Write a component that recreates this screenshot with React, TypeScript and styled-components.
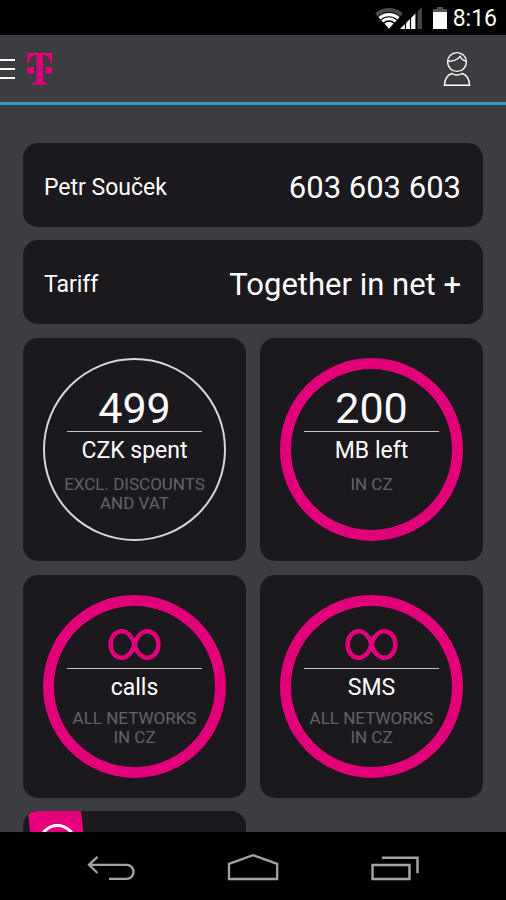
import React from "react";
import styled, { createGlobalStyle } from "styled-components";

const MAGENTA = "#e2007a";

const GlobalStyle = createGlobalStyle`
  *, *::before, *::after { box-sizing: border-box; }
  body {
    margin: 0;
    background: #3c3d41;
    font-family: Roboto, "Liberation Sans", sans-serif;
    color: #fff;
  }
  h2, p { margin: 0; font-weight: 400; }
  svg { display: block; }
`;

const Screen = styled.div`
  display: flex;
  flex-direction: column;
  height: 100vh;
`;

const StatusBar = styled.div`
  display: flex;
  flex: none;
  justify-content: flex-end;
  align-items: center;
  height: 35px;
  padding-right: 9px;
  background: #000;
`;

const Clock = styled.time`
  margin-left: 6px;
  padding-top: 3px;
  font-size: 23px;
  line-height: 32px;
`;

const Header = styled.header`
  display: flex;
  flex: none;
  align-items: center;
  height: 70px;
  padding-right: 35px;
  border-bottom: 3px solid #329bc9;
`;

const IconButton = styled.button`
  display: flex;
  padding: 0;
  border: 0;
  background: none;
  color: inherit;
  cursor: pointer;
`;

const MenuButton = styled(IconButton)`
  margin-right: 12px;
`;

const ProfileButton = styled(IconButton)`
  margin-left: auto;
`;

const Content = styled.main`
  display: flex;
  flex: 1;
  flex-direction: column;
  gap: 13px;
  min-height: 0;
  padding: 38px 23px 0;
  overflow: hidden;
`;

const Card = styled.section`
  flex: none;
  border-radius: 15px;
  background: #1b191e;
`;

const InfoCard = styled(Card)`
  display: flex;
  justify-content: space-between;
  align-items: center;
  height: 84px;
  padding: 6px 22px 0 21px;
`;

const InfoLabel = styled.h2`
  font-size: 23px;
  line-height: 32px;
`;

const InfoValue = styled.p`
  font-size: 31px;
  line-height: 40px;
`;

const Tiles = styled.div`
  display: grid;
  flex: none;
  grid-template-columns: 1fr 1fr;
  gap: 14px;
  padding-top: 1px;
`;

const Tile = styled(Card)`
  padding: 20px;
  aspect-ratio: 1;
`;

const Ring = styled.div<{ $full: boolean }>`
  display: flex;
  flex-direction: column;
  align-items: center;
  height: 100%;
  padding-top: ${(p) => (p.$full ? 15 : 24)}px;
  border: ${(p) => (p.$full ? `11px solid ${MAGENTA}` : "2px solid #d5d7d9")};
  border-radius: 50%;
  text-align: center;
`;

const Amount = styled.div`
  display: flex;
  justify-content: center;
  width: 135px;
  height: 48px;
  border-bottom: 1px solid #bfc1c3;
  font-size: 43px;
  line-height: 48px;
`;

const Unit = styled.h2`
  font-size: 23px;
  line-height: 37px;
`;

const Note = styled.p<{ $low: boolean }>`
  padding-top: ${(p) => (p.$low ? 6 : 3)}px;
  color: #626467;
  font-size: 17px;
  line-height: 19px;
  white-space: pre-line;
`;

const PromoTile = styled(Card)`
  height: 223px;
  margin-top: -1px;
  padding-left: 5px;
  overflow: hidden;
`;

const NavBar = styled.nav`
  display: flex;
  flex: none;
  justify-content: center;
  align-items: center;
  gap: 81px;
  height: 68px;
  padding-top: 2px;
  background: #000;
  color: #a3a3a3;
`;

const WifiIcon = () => (
  <svg width="28" height="22" viewBox="0 0 28 22" fill="none" aria-label="Wi-Fi" role="img">
    <path d="M1.400 8A18.500 18.500 0 0 1 26.600 8" stroke="#4a4a4a" strokeWidth="4" />
    <path d="M4.500 11.300A14 14 0 0 1 23.500 11.300" stroke="#fff" strokeWidth="3.400" />
    <path d="M7.300 14.300A9.800 9.800 0 0 1 20.700 14.300" stroke="#fff" strokeWidth="3" />
    <path d="M9.400 16.500A6.800 6.800 0 0 1 18.600 16.500L14 21.700Z" fill="#fff" />
  </svg>
);

const SignalIcon = () => (
  <svg width="22" height="22" viewBox="0 0 22 22" aria-label="Signal" role="img">
    <path d="M0 22L16 6V22Z" fill="#fff" />
    <path d="M17.5 4.5L22 0V22H17.5Z" fill="#444" />
    <path d="M5.500 15V22M10.500 10V22M16 4V22" stroke="#000" strokeWidth="1.2" />
  </svg>
);

const BatteryIcon = () => (
  <svg width="14" height="22" viewBox="0 0 14 22" aria-label="Battery" role="img">
    <path d="M0 6V2H4V0H10V2H14V6Z" fill="#555" />
    <path d="M0 5H14V22H0Z" fill="#fff" />
  </svg>
);

const StatusIcons = styled.div`
  display: flex;
`;

const SignalSlot = styled.span`
  margin-left: -3px;
`;

const BatterySlot = styled.span`
  margin-left: 11px;
`;

const MenuIcon = () => (
  <svg width="15" height="22" viewBox="0 0 15 22">
    <path d="M0 2H15M0 11H15M0 20H15" stroke="#fff" strokeWidth="2" />
  </svg>
);

const LogoIcon = () => (
  <svg width="26" height="32" viewBox="0 0 26 32" role="img" aria-label="T">
    <path
      d="M0.300 0H25.300V10.500H23.600C23.200 5.500 21 2.400 16 1.800V25.600Q16 29.300 18.200 29.700L20.500 30V31.700H5V30L7.600 29.700Q9.600 29.300 9.600 25.600V1.800C4.600 2.400 2.400 5.500 2 10.500H0.300ZM0.300 14H7V20.700H0.300ZM18.600 14H25.300V20.700H18.600Z"
      fill={MAGENTA}
    />
  </svg>
);

const PersonIcon = () => (
  <svg width="28" height="36" viewBox="0 0 28 36" fill="none" stroke="#fff" strokeWidth="1.4">
    <circle cx="14" cy="11" r="9.4" />
    <path d="M4.8 10.2Q13 10.5 17.2 5.4Q18.7 9 23 10" />
    <path d="M8.7 22.5Q14 25.5 19.3 22.5Q26.2 25 26.6 34.3H1.4Q1.8 25 8.7 22.5Z" />
  </svg>
);

const InfinityIcon = () => (
  <svg width="53" height="48" viewBox="0 0 53 48" fill="none" stroke={MAGENTA} strokeWidth="4.6" role="img" aria-label="Unlimited">
    <path d="M26.500 23.500C24.500 16.500 20 10.300 14 10.300C7.500 10.300 2.600 16 2.600 23.500C2.600 31 7.500 36.700 14 36.700C20 36.700 24.500 30.500 26.500 23.500C28.500 16.500 33 10.300 39 10.300C45.500 10.300 50.400 16 50.400 23.500C50.400 31 45.500 36.700 39 36.700C33 36.700 28.500 30.500 26.500 23.500Z" />
  </svg>
);

const PromoIcon = () => (
  <svg width="60" height="44" viewBox="0 0 60 44">
    <path d="M0 0H53L58 44H4Z" fill="#e6007e" />
    <circle cx="29.5" cy="32" r="17.5" fill="none" stroke="#fff" strokeWidth="3" />
  </svg>
);

const BackIcon = () => (
  <svg width="60" height="28" viewBox="83 853 60 28" fill="none" stroke="currentColor" strokeWidth="2.3">
    <path d="M90 864.8H127.500A7 7 0 0 1 127.500 878.900H110M98.500 856.800L90 864.800L98.500 873" />
  </svg>
);

const HomeIcon = () => (
  <svg width="60" height="28" viewBox="223 853 60 28" fill="none" stroke="currentColor" strokeWidth="2.3">
    <path d="M229 863.800L253 855.200L277.200 863.800V879H229Z" />
  </svg>
);

const RecentsIcon = () => (
  <svg width="60" height="28" viewBox="364 853 60 28" fill="none" stroke="currentColor" strokeWidth="2.5">
    <path d="M372.500 865H409.500V879H372.500ZM382 857.800H417.500V873.300" />
  </svg>
);

type Usage = {
  amount?: string;
  unit: string;
  note: string;
  full: boolean;
};

const usages: Usage[] = [
  { amount: "499", unit: "CZK spent", note: "EXCL. DISCOUNTS\nAND VAT", full: false },
  { amount: "200", unit: "MB left", note: "IN CZ", full: true },
  { unit: "calls", note: "ALL NETWORKS\nIN CZ", full: true },
  { unit: "SMS", note: "ALL NETWORKS\nIN CZ", full: true },
];

export default function App() {
  return (
    <Screen>
      <GlobalStyle />
      <StatusBar>
        <StatusIcons>
          <WifiIcon />
          <SignalSlot>
            <SignalIcon />
          </SignalSlot>
          <BatterySlot>
            <BatteryIcon />
          </BatterySlot>
        </StatusIcons>
        <Clock>8:16</Clock>
      </StatusBar>
      <Header>
        <MenuButton aria-label="Menu">
          <MenuIcon />
        </MenuButton>
        <LogoIcon />
        <ProfileButton aria-label="Profile">
          <PersonIcon />
        </ProfileButton>
      </Header>
      <Content>
        <InfoCard>
          <InfoLabel>Petr Souček</InfoLabel>
          <InfoValue>603 603 603</InfoValue>
        </InfoCard>
        <InfoCard>
          <InfoLabel>Tariff</InfoLabel>
          <InfoValue>Together in net +</InfoValue>
        </InfoCard>
        <Tiles>
          {usages.map((u) => (
            <Tile key={u.unit}>
              <Ring $full={u.full}>
                <Amount>{u.amount ?? <InfinityIcon />}</Amount>
                <Unit>{u.unit}</Unit>
                <Note $low={Boolean(u.amount)}>{u.note}</Note>
              </Ring>
            </Tile>
          ))}
          <PromoTile>
            <PromoIcon />
          </PromoTile>
        </Tiles>
      </Content>
      <NavBar>
        <IconButton aria-label="Back">
          <BackIcon />
        </IconButton>
        <IconButton aria-label="Home">
          <HomeIcon />
        </IconButton>
        <IconButton aria-label="Recent apps">
          <RecentsIcon />
        </IconButton>
      </NavBar>
    </Screen>
  );
}
